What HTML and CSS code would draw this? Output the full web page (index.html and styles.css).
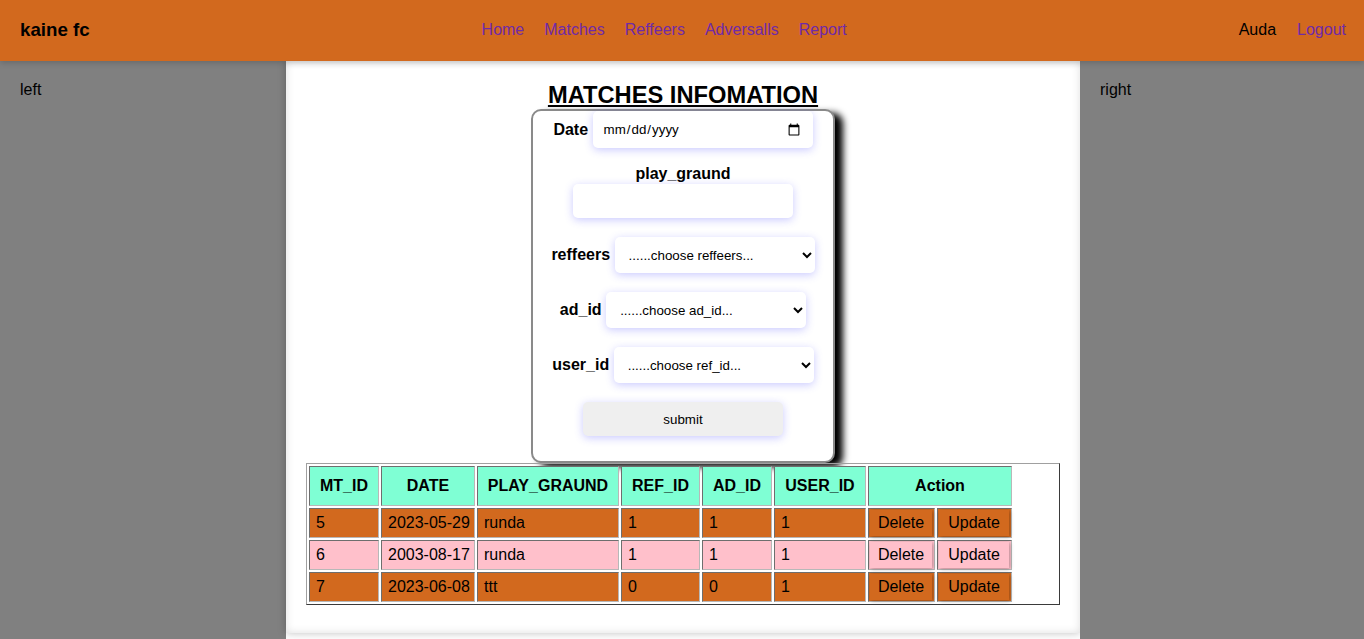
FILE: index.html
```html
<!DOCTYPE html>
<html lang="en">
<head>
<meta charset="utf-8">
<title>kaine fc</title>
<link rel="stylesheet" href="styles.css">
</head>
<body>
<header class="topbar">
  <h3 class="brand">kaine fc</h3>
  <nav class="links">
    <a href="#">Home</a>
    <a href="#">Matches</a>
    <a href="#">Reffeers</a>
    <a href="#">Adversalls</a>
    <a href="#">Report</a>
  </nav>
  <div class="user">
    <span class="username">Auda</span>
    <a href="#">Logout</a>
  </div>
</header>
<div class="layout">
  <aside class="side side-left">left</aside>
  <main class="center">
    <h2 class="title">MATCHES INFOMATION</h2>
    <form class="card">
      <div class="row row-date">
        <label class="lbl">Date</label>
        <input type="date" class="f-date">
      </div>
      <label class="lbl lbl-block">play_graund</label>
      <input type="text" class="f-text">
      <div class="row row-sel">
        <label class="lbl">reffeers</label>
        <select class="f-select"><option>......choose reffeers...</option></select>
      </div>
      <div class="row row-sel">
        <label class="lbl">ad_id</label>
        <select class="f-select"><option>......choose ad_id...</option></select>
      </div>
      <div class="row row-sel">
        <label class="lbl">user_id</label>
        <select class="f-select"><option>......choose ref_id...</option></select>
      </div>
      <button type="button" class="submit">submit</button>
    </form>
    <div class="table-wrap">
      <table class="matches">
        <thead>
          <tr>
            <th class="c-id">MT_ID</th>
            <th class="c-date">DATE</th>
            <th class="c-play">PLAY_GRAUND</th>
            <th class="c-ref">REF_ID</th>
            <th class="c-ad">AD_ID</th>
            <th class="c-user">USER_ID</th>
            <th class="c-action" colspan="2">Action</th>
          </tr>
        </thead>
        <tbody>
          <tr class="r-odd">
            <td>5</td><td>2023-05-29</td><td>runda</td><td>1</td><td>1</td><td>1</td>
            <td class="btn-cell c-del"><span class="btn">Delete</span></td>
            <td class="btn-cell c-upd"><span class="btn">Update</span></td>
          </tr>
          <tr class="r-even">
            <td>6</td><td>2003-08-17</td><td>runda</td><td>1</td><td>1</td><td>1</td>
            <td class="btn-cell c-del"><span class="btn">Delete</span></td>
            <td class="btn-cell c-upd"><span class="btn">Update</span></td>
          </tr>
          <tr class="r-odd">
            <td>7</td><td>2023-06-08</td><td>ttt</td><td>0</td><td>0</td><td>1</td>
            <td class="btn-cell c-del"><span class="btn">Delete</span></td>
            <td class="btn-cell c-upd"><span class="btn">Update</span></td>
          </tr>
        </tbody>
      </table>
    </div>
  </main>
  <aside class="side side-right">right</aside>
</div>
</body>
</html>
```

FILE: styles.css
```css
* {
  box-sizing: border-box;
}

body {
  margin: 0;
  background: #ffffff;
  font-family: "Liberation Sans", Arial, sans-serif;
  font-size: 16px;
  color: #000;
}

/* ---------- top bar ---------- */
.topbar {
  position: relative;
  z-index: 2;
  height: 61px;
  background: #d2691e;
  display: flex;
  align-items: center;
  justify-content: space-between;
  padding: 0 18px 2px 20px;
  box-shadow: 0 2px 6px rgba(0, 0, 0, 0.18);
}

.brand {
  margin: 0;
  font-size: 18.72px;
  font-weight: bold;
  color: #000;
}

.links {
  display: flex;
  gap: 20px;
}

.links a,
.user a {
  color: #6f2aa8;
  text-decoration: none;
}

.user {
  display: flex;
  gap: 21px;
}

.username {
  color: #000;
}

/* ---------- three columns ---------- */
.layout {
  display: flex;
  align-items: flex-start;
}

.side {
  background: #808080;
  min-height: calc(100vh - 61px);
  padding: 20px 20px;
  color: #000;
}

.side-left {
  flex: 0 0 286px;
}

.side-right {
  flex: 1 1 auto;
}

.center {
  flex: 0 0 794px;
  background: #ffffff;
  padding: 0 20px 28px;
  box-shadow: 0 0 8px rgba(0, 0, 0, 0.25), inset 0 0 9px rgba(0, 0, 0, 0.13);
}

.title {
  margin: 21px 0 0;
  text-align: center;
  font-size: 23.7px;
  font-weight: bold;
  text-decoration: underline;
  line-height: 27px;
}

/* ---------- form card ---------- */
.card {
  width: 304px;
  margin: 0 auto;
  border: 2px solid #8a8a8a;
  border-radius: 10px;
  box-shadow: 8px 4px 7px #000;
  background: #fff;
  display: flex;
  flex-direction: column;
  align-items: center;
  padding: 0 0 25px;
}

.row {
  display: flex;
  align-items: center;
  justify-content: center;
  gap: 4.5px;
}

.row-sel {
  margin-top: 19px;
}

.lbl {
  font-weight: bold;
  font-size: 16px;
  line-height: 18px;
}

.lbl-block {
  margin-top: 17px;
}

.f-date,
.f-text,
.f-select,
.submit {
  border: none;
  border-radius: 5px;
  background: #ffffff;
  box-shadow: 0 2px 8px rgba(90, 90, 255, 0.32);
  font-family: "Liberation Sans", Arial, sans-serif;
  font-size: 13.33px;
  color: #000;
  outline: none;
}

.f-date {
  width: 220px;
  height: 37px;
  padding: 0 10px;
}

.f-text {
  width: 220px;
  height: 34px;
  margin-top: 1px;
  padding: 0 10px;
}

.f-select {
  width: 200px;
  height: 36px;
  padding: 0 10px;
}

.submit {
  width: 200px;
  height: 34px;
  margin-top: 19px;
  background: #efefef;
  text-align: center;
}

/* ---------- table ---------- */
.table-wrap {
  border: 1px solid;
  border-color: #a0a0a0 #3a3a3a #3a3a3a #a0a0a0;
}

.matches {
  border-collapse: separate;
  border-spacing: 2px;
}

.matches th,
.matches td {
  border: 1px solid;
  border-color: #6e6e6e #b8b8b8 #b8b8b8 #6e6e6e;
  font-size: 16px;
  line-height: 18px;
}

.matches th {
  background: #7fffd4;
  padding: 10px 4px;
  text-align: center;
  font-weight: bold;
}

.matches td {
  padding: 5px 4px 5px 6px;
  text-align: left;
  white-space: nowrap;
}

.c-id { width: 70px; }
.c-date { width: 94px; }
.c-play { width: 142px; }
.c-ref { width: 79px; }
.c-ad { width: 70px; }
.c-user { width: 92px; }
.c-action { width: 144px; }
.c-del { width: 67px; }
.c-upd { width: 75px; }

.r-odd td {
  background: #d2691e;
}

.r-even td {
  background: #ffc0cb;
}

.matches td.btn-cell {
  padding: 0;
}

.btn {
  display: block;
  margin: 1px 2px 1px 1px;
  padding: 4px 0;
  text-align: center;
  box-shadow: 1px 1px 4px rgba(0, 0, 0, 0.3);
}
```
